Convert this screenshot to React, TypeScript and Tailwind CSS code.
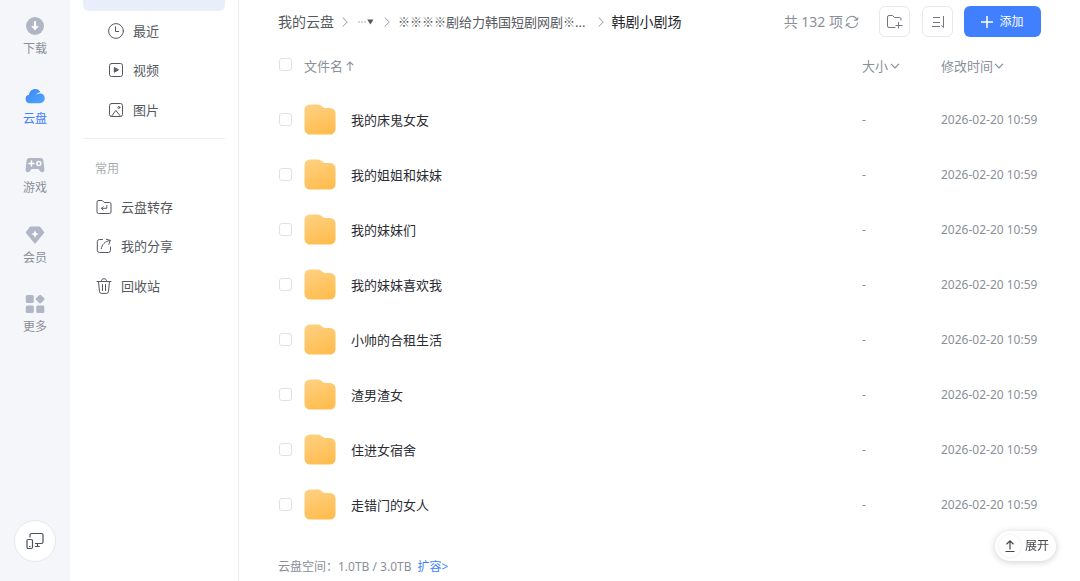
import type { ReactNode } from "react";

const railItems = [
  {
    label: "下载",
    icon: (
      <svg viewBox="0 0 20 20" className="size-5" aria-hidden="true">
        <circle cx="10" cy="10" r="9" fill="#b1b6c6" />
        <path d="M10 6v5.5" stroke="#fff" strokeWidth="2.2" strokeLinecap="round" />
        <path d="M6.8 10.4h6.4L10 14z" fill="#fff" stroke="#fff" strokeWidth="0.8" strokeLinejoin="round" />
      </svg>
    ),
  },
  {
    label: "云盘",
    active: true,
    icon: (
      <svg viewBox="0 0 20 20" className="size-5" aria-hidden="true">
        <defs>
          <linearGradient id="cloud" x1="0" y1="0" x2="1" y2="1">
            <stop offset="0" stopColor="#3f86f5" />
            <stop offset="1" stopColor="#4fa6ff" />
          </linearGradient>
        </defs>
        <path d="M4.6 17.2a4.3 4.3 0 0 1-.6-8.5C4.400 5.300 7 2.900 10.200 2.900c2.500 0 4.300 1.200 5.300 3.300-2.300.3-4 1.400-5 3.200 1.500-1.500 3.300-2.200 5.500-1.800 2.200.4 3.700 2.200 3.700 4.700 0 2.800-2 4.900-4.800 4.900z" fill="url(#cloud)" />
      </svg>
    ),
  },
  {
    label: "游戏",
    icon: (
      <svg viewBox="0 0 20 20" className="size-5" aria-hidden="true">
        <path d="M4.500 3h11c1.700 0 2.600 1.100 2.900 2.700l1 8.700c.2 2.700-2.600 3.800-4.300 1.900L13.500 14h-7l-1.600 2.300c-1.700 1.900-4.500.8-4.300-1.900l1-8.700C1.900 4.100 2.800 3 4.500 3z" fill="#b1b6c6" />
        <path d="M4 8.500h5M6.500 6v5" stroke="#fff" strokeWidth="1.500" strokeLinecap="round" />
        <circle cx="13.800" cy="8.500" r="2" fill="none" stroke="#fff" strokeWidth="1.400" />
      </svg>
    ),
  },
  {
    label: "会员",
    icon: (
      <svg viewBox="0 0 20 20" className="size-5" aria-hidden="true">
        <path d="M5.500 2.200h9l4 5.300L10 17.800 1.500 7.500z" fill="#b1b6c6" stroke="#b1b6c6" strokeWidth="1.500" strokeLinejoin="round" />
        <path d="M10 5.300l1.100 2.700 2.700 1.100-2.700 1.100L10 12.900l-1.100-2.700-2.700-1.100L8.900 8z" fill="#fff" />
      </svg>
    ),
  },
  {
    label: "更多",
    icon: (
      <svg viewBox="0 0 20 20" className="size-5" fill="#b1b6c6" aria-hidden="true">
        <rect x="0.800" y="1" width="8" height="8" rx="1.500" />
        <rect x="11.600" y="1.600" width="7" height="7" rx="1.400" transform="rotate(45 15.100 5.100)" />
        <rect x="0.800" y="11.500" width="8" height="7.500" rx="1.500" />
        <rect x="11.300" y="11.500" width="8" height="7.500" rx="1.500" />
      </svg>
    ),
  },
];

function LineIcon({ children }: { children: ReactNode }) {
  return (
    <svg viewBox="0 0 16 16" className="size-4 shrink-0" fill="none" stroke="currentColor" strokeWidth="1" strokeLinecap="round" strokeLinejoin="round" aria-hidden="true">
      {children}
    </svg>
  );
}

const fileTypes = [
  {
    label: "最近",
    icon: (
      <LineIcon>
        <circle cx="8" cy="8" r="7.400" />
        <path d="M7.500 3.800v4.700h3.200" />
      </LineIcon>
    ),
  },
  {
    label: "视频",
    icon: (
      <LineIcon>
        <rect x="1.500" y="1.500" width="13" height="13" rx="2" />
        <path d="M6.300 5.800v4.400L10.200 8z" fill="currentColor" />
      </LineIcon>
    ),
  },
  {
    label: "图片",
    icon: (
      <LineIcon>
        <rect x="1.500" y="1.500" width="13" height="13" rx="2" />
        <path d="M3.500 14.200l4.300-5.700 4.700 5.700" />
        <circle cx="10.800" cy="5.500" r="1" />
      </LineIcon>
    ),
  },
];

const shortcuts = [
  {
    label: "云盘转存",
    icon: (
      <LineIcon>
        <path d="M2.500 1.500h3.700l2 2h5.300a1.500 1.500 0 0 1 1.500 1.500v8a1.500 1.500 0 0 1-1.500 1.500h-11A1.500 1.500 0 0 1 1 13V3a1.500 1.500 0 0 1 1.500-1.500z" />
        <path d="M10.800 6.500v2.800H5.500M7.200 7.500L5.400 9.300l1.800 1.800" />
      </LineIcon>
    ),
  },
  {
    label: "我的分享",
    icon: (
      <LineIcon>
        <path d="M6.500 1.500h-3A2.200 2.200 0 0 0 1.300 3.700v8.600a2.200 2.200 0 0 0 2.200 2.200h8.800a2.200 2.200 0 0 0 2.200-2.200V9" />
        <path d="M5.300 10.800c.6-4.300 3.600-7.500 8.700-8.300M10.400 1.300l3.900 1.100-1.400 3.900" />
      </LineIcon>
    ),
  },
  {
    label: "回收站",
    icon: (
      <LineIcon>
        <path d="M1 3.500h14M5.300 3.300C5.500 1.500 6.300.8 8 .8s2.500.7 2.700 2.500M2.500 3.500l1 10a2 2 0 0 0 2 1.900h5a2 2 0 0 0 2-1.900l1-10M6.500 6.500v6M9.500 6.500v6" />
      </LineIcon>
    ),
  },
];

const folders = [
  "我的床鬼女友",
  "我的姐姐和妹妹",
  "我的妹妹们",
  "我的妹妹喜欢我",
  "小帅的合租生活",
  "渣男渣女",
  "住进女宿舍",
  "走错门的女人",
];

function NavList({ items, indent }: { items: typeof fileTypes; indent?: boolean }) {
  return (
    <ul className="grid h-[119px] grid-rows-3">
      {items.map((item) => (
        <li key={item.label} className="flex">
          <a href="#" className={`flex flex-1 items-center gap-[9px] text-[#55585e] ${indent ? "pl-[25px]" : "pl-[13px]"}`}>
            {item.icon}
            {item.label}
          </a>
        </li>
      ))}
    </ul>
  );
}

function Crumb() {
  return (
    <svg viewBox="0 0 6 12" className="h-3 w-[6px] shrink-0" fill="none" stroke="#94979e" aria-hidden="true">
      <path d="M.7 1.500L5.300 6 .7 10.500" />
    </svg>
  );
}

function Caret() {
  return (
    <svg viewBox="0 0 10 6" className="h-[6px] w-[10px]" fill="none" stroke="currentColor" strokeWidth="1.200" aria-hidden="true">
      <path d="M1 .8l4 4 4-4" />
    </svg>
  );
}

function Folder({ id }: { id: string }) {
  return (
    <svg viewBox="0 0 32 32" preserveAspectRatio="none" className="h-[31px] w-8 shrink-0" aria-hidden="true">
      <defs>
        <linearGradient id={id} x1="0.200" y1="0" x2="0.600" y2="1">
          <stop offset="0" stopColor="#ffd080" />
          <stop offset="1" stopColor="#ffbd4f" />
        </linearGradient>
      </defs>
      <path d="M6 .5h7.500c1.700 0 2.800.5 4 1.600 1.300 1.300 2.200 1.900 4 1.900H26a5.500 5.500 0 0 1 5.500 5.500V26a5.500 5.500 0 0 1-5.500 5.500H6A5.500 5.500 0 0 1 .5 26V6A5.500 5.500 0 0 1 6 .5z" fill={`url(#${id})`} />
    </svg>
  );
}

function Tick({ label }: { label: string }) {
  return (
    <input type="checkbox" aria-label={label} className="ml-px block size-[13px] appearance-none rounded-[3px] border border-[#dfe1e5] bg-white checked:bg-[#4080ff]" />
  );
}

export default function App() {
  return (
    <div className="flex min-h-screen bg-white font-['Noto_Sans','Noto_Sans_CJK_SC','DejaVu_Sans',sans-serif] text-[13px] leading-5 text-[#2b2d33]">
      <nav className="flex w-[70px] shrink-0 flex-col items-center justify-between bg-[#f4f6f9] pt-4 pb-[19px]">
        <ul className="flex h-[320px] flex-col justify-between">
          {railItems.map((item) => (
            <li key={item.label}>
              <a href="#" className={`flex flex-col items-center gap-1 text-[12px] leading-[18px] ${item.active ? "text-[#4080ff]" : "text-[#8b8f99]"}`}>
                {item.icon}
                {item.label}
              </a>
            </li>
          ))}
        </ul>
        <button type="button" aria-label="设备" className="flex size-[42px] items-center justify-center rounded-full border border-[#e6e8ec] bg-white text-[#4d515c]">
          <svg viewBox="0 0 18 18" className="size-[18px]" fill="none" stroke="currentColor" strokeWidth="1.200" strokeLinejoin="round" aria-hidden="true">
            <path d="M4 5.500V3a1.500 1.500 0 0 1 1.500-1.500h10A1.500 1.500 0 0 1 17 3v7a1.500 1.500 0 0 1-1.500 1.500H9M11.500 11.500v3M8.800 14.500h5" />
            <rect x="1" y="7.500" width="5.500" height="9" rx="1.200" />
            <path d="M3 14.500h1.500" />
          </svg>
        </button>
      </nav>

      <aside className="w-[169px] shrink-0 border-r border-[#eceef1] pr-[13px] pl-[13px]">
        <div className="h-[11px] rounded-b-md bg-[#e9eefb]" />
        <NavList items={fileTypes} indent />
        <hr className="mt-2 border-[#eceef1]" />
        <h2 className="mt-[21px] mb-[9px] pl-3 text-[12px] leading-[18px] text-[#a9acb3]">常用</h2>
        <NavList items={shortcuts} />
      </aside>

      <main className="min-w-0 flex-1 px-[39px] pt-[6px]">
        <header className="flex h-[31px] items-center justify-between">
          <nav aria-label="路径" className="flex min-w-0 items-center gap-2 text-[14px] whitespace-nowrap text-[#55585e]">
            <a href="#">我的云盘</a>
            <Crumb />
            <button type="button" aria-label="上级目录" className="flex w-5 shrink-0 items-center justify-center">
              <svg viewBox="0 0 16 8" className="h-2 w-4" fill="currentColor" aria-hidden="true">
                <path d="M.5 3.500h1v1h-1zM3.500 3.500h1v1h-1zM6.500 3.500h1v1h-1zM9.200 1.500h6.300l-3.150 5z" />
              </svg>
            </button>
            <Crumb />
            <a href="#" className="mr-1 truncate text-[13px]"><span className="font-['Noto_Sans_CJK_SC',sans-serif] text-[12px]">※※※※</span>剧给力韩国短剧网剧<span className="font-['Noto_Sans_CJK_SC',sans-serif] text-[12px]">※</span>...</a>
            <Crumb />
            <span className="text-[#24262b]">韩剧小剧场</span>
          </nav>
          <div className="flex shrink-0 items-center">
            <span className="text-[14px] text-[#8b8f99]">共 132 项</span>
            <button type="button" aria-label="刷新" className="mr-5 ml-[2px] text-[#8b8f99]">
              <svg viewBox="0 0 14 14" className="size-[14px]" fill="none" stroke="currentColor" strokeWidth="1.100" strokeLinecap="round" strokeLinejoin="round" aria-hidden="true">
                <path d="M1.500 6.200A5.500 5.500 0 0 1 12 4.700M12.500 7.800A5.500 5.500 0 0 1 2 9.300M9.700 5.400l2.500-.5.900-2M4.300 8.600l-2.500.5-.9 2" />
              </svg>
            </button>
            <button type="button" aria-label="新建文件夹" className="mr-3 flex size-[31px] items-center justify-center rounded-md border border-[#e6e8ec] text-[#73767d]">
              <svg viewBox="0 0 16 14" className="h-[14px] w-4" fill="none" stroke="currentColor" aria-hidden="true">
                <path d="M8.500 12.500H2A1.500 1.500 0 0 1 .5 11V2A1.500 1.500 0 0 1 2 .5h3.500l2 2h5A1.500 1.500 0 0 1 14 4v1.500M11.500 7v6.500M8.500 10.500h7" />
              </svg>
            </button>
            <button type="button" aria-label="排序" className="mr-[11px] flex size-[31px] items-center justify-center rounded-md border border-[#e6e8ec] text-[#73767d]">
              <svg viewBox="0 0 14 14" className="size-[14px]" fill="none" stroke="currentColor" aria-hidden="true">
                <path d="M2 2.500h7M2 7.500h7M1 11.500h8M12.500 1v11.500l-2.200-2" />
              </svg>
            </button>
            <button type="button" className="flex h-[31px] w-[77px] items-center justify-center gap-[6px] rounded-md bg-[#4080ff] text-[12px] text-white">
              <svg viewBox="0 0 12 12" className="size-3" stroke="currentColor" strokeWidth="1.500" aria-hidden="true">
                <path d="M0 6h12M6 0v12" />
              </svg>
              添加
            </button>
          </div>
        </header>

        <table className="w-full table-fixed border-collapse text-left">
          <thead className="text-[#8b8f99]">
            <tr className="h-[55px]">
              <th className="w-[26px] p-0"><Tick label="全选" /></th>
              <th className="p-0 pt-[2px] font-normal">
                <button type="button" className="flex items-center gap-[3px]">
                  文件名
                  <svg viewBox="0 0 8 10" className="h-[10px] w-2" fill="none" stroke="currentColor" strokeWidth="1.100" aria-hidden="true">
                    <path d="M4 10V1M.8 4.200L4 1l3.200 3.200" />
                  </svg>
                </button>
              </th>
              <th className="w-[79px] p-0 pt-[2px] font-normal">
                <button type="button" className="flex items-center gap-[2px]">大小<Caret /></button>
              </th>
              <th className="w-[100px] p-0 pt-[2px] font-normal">
                <button type="button" className="flex items-center gap-px">修改时间<Caret /></button>
              </th>
            </tr>
          </thead>
          <tbody>
            {folders.map((name, i) => (
              <tr key={name} className="h-[55px]">
                <td className="p-0"><Tick label={name} /></td>
                <td className="p-0">
                  <a href="#" className="flex h-[31px] items-center gap-[15px]">
                    <Folder id={`folder-${i}`} />
                    {name}
                  </a>
                </td>
                <td className="p-0 text-[12px] text-[#8b8f99]">-</td>
                <td className="p-0 text-[12px] whitespace-nowrap text-[#8b8f99]">2026-02-20 10:59</td>
              </tr>
            ))}
          </tbody>
        </table>

        <footer className="mt-[26px] flex gap-[6px] text-[12px] leading-[18px] text-[#8b8f99]">
          <span>云盘空间：1.0TB / 3.0TB</span>
          <a href="#" className="text-[#4080ff]">扩容&gt;</a>
        </footer>
      </main>

      <button type="button" className="fixed right-6 bottom-5 flex h-[30px] w-[61px] items-center gap-1 rounded-full bg-white pl-1 text-[12px] text-[#43464d] shadow-[0_1px_7px_rgba(0,0,0,0.2)]">
        <span className="flex size-[22px] items-center justify-center rounded-full shadow-[0_0_3px_rgba(0,0,0,0.1)]">
          <svg viewBox="0 0 10 12" className="h-3 w-[10px]" fill="none" stroke="currentColor" strokeWidth="1.200" aria-hidden="true">
            <path d="M5 9.500V1M1.500 4.300L5 .9l3.500 3.400M.5 11.500h9" />
          </svg>
        </span>
        展开
      </button>
    </div>
  );
}
